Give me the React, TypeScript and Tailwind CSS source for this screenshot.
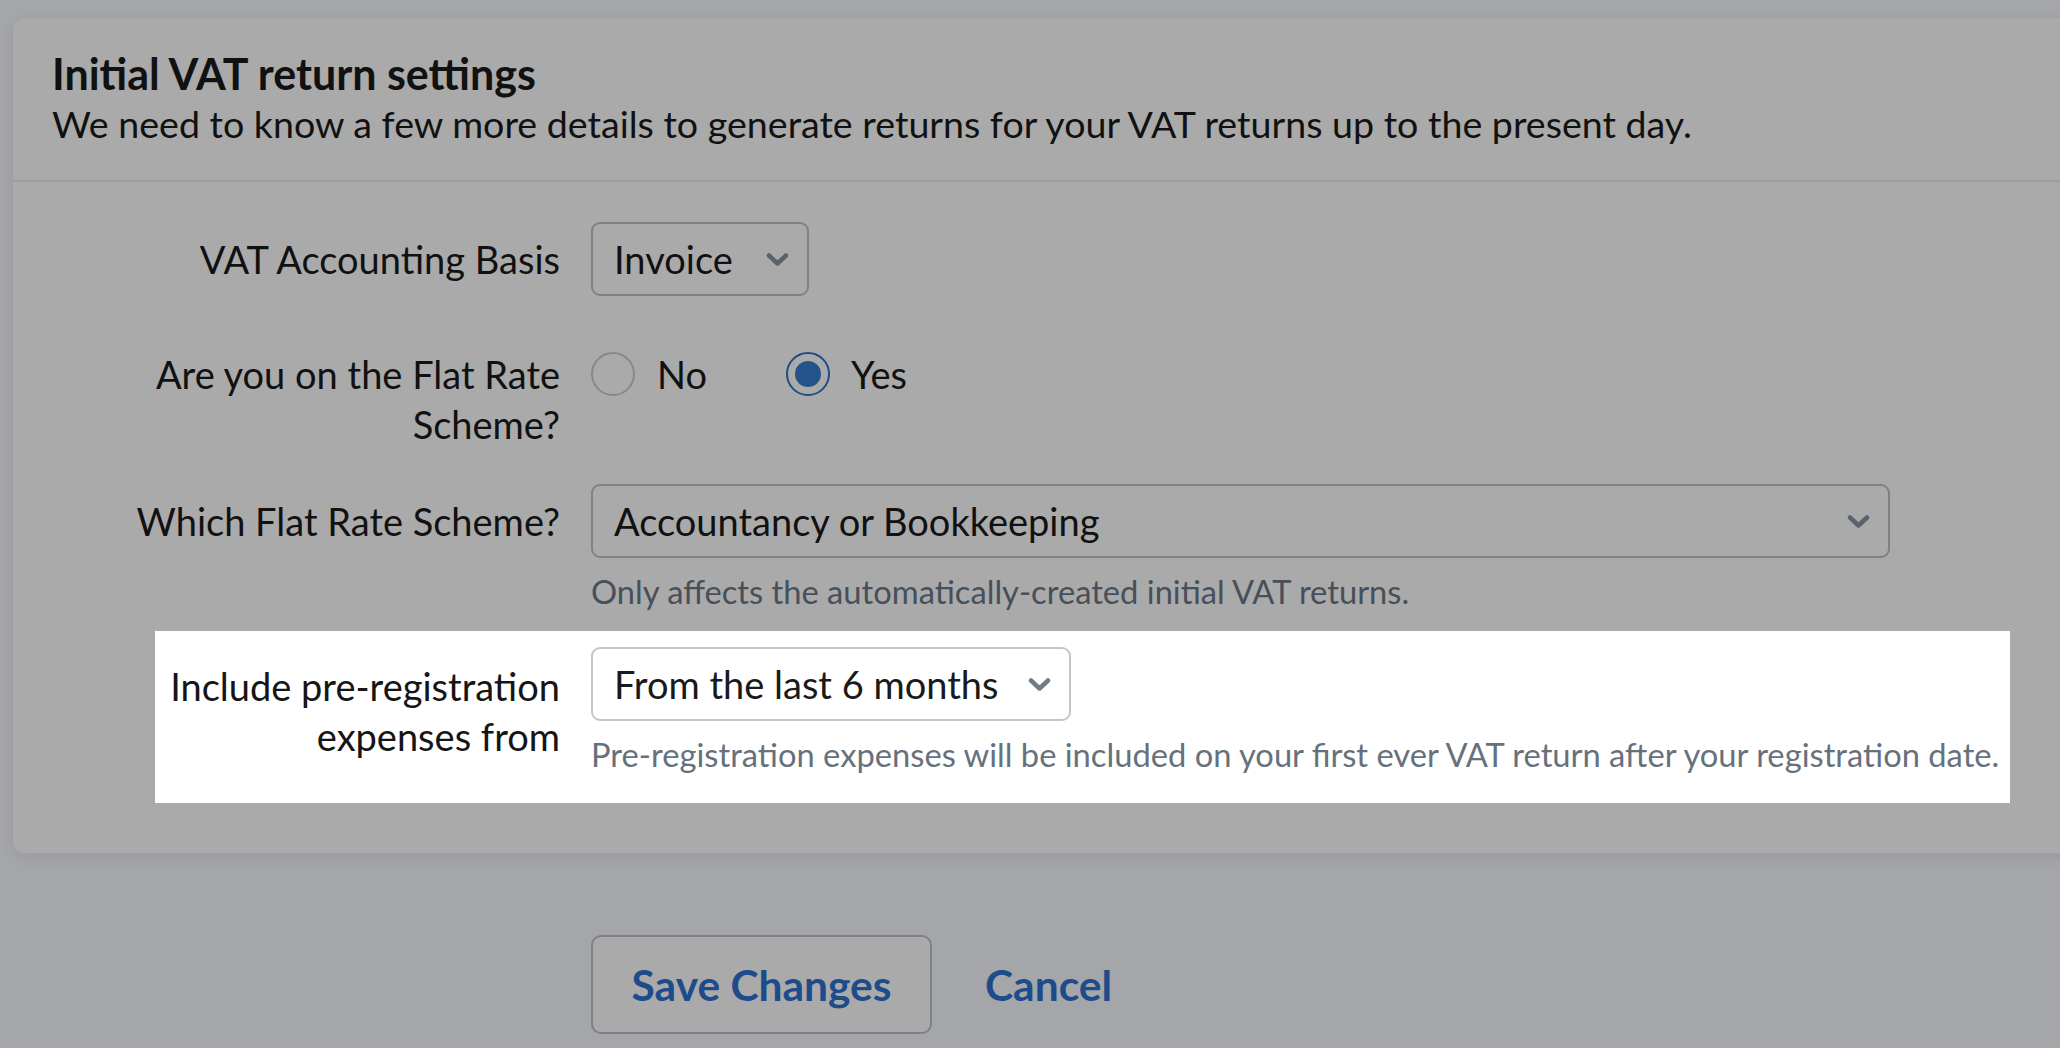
import React from "react";

const font = { fontFamily: "Lato, 'Open Sans', sans-serif" };

function Chevron({ color }: { color: string }) {
  return (
    <svg width="23" height="15" viewBox="0 0 23 15" className="shrink-0">
      <path d="M3 3.5 L11.5 11.5 L20 3.5" fill="none" stroke={color} strokeWidth="4.5" strokeLinecap="round" strokeLinejoin="round" />
    </svg>
  );
}

function Select({ value, width, light }: { value: string; width: string; light?: boolean }) {
  return (
    <div
      className={`${width} h-[74px] flex items-center justify-between pl-[21px] pr-[18px] rounded-[9px] border-2 ${
        light ? "border-[#c2c6cb] bg-white text-[#1a1a1a]" : "border-[#7e8186] text-[#111111]"
      } text-[38px]`}
    >
      <span className="whitespace-nowrap">{value}</span>
      <Chevron color={light ? "#707b86" : "#5a636c"} />
    </div>
  );
}

function Label({ lines, pt }: { lines: string[]; pt: string }) {
  return (
    <div className={`w-full flex flex-col items-end ${pt}`}>
      {lines.map((l) => (
        <span key={l} className="whitespace-nowrap text-[38px] leading-[50px] text-[#111111]">
          {l}
        </span>
      ))}
    </div>
  );
}

export default function App() {
  return (
    <div className="w-[2060px] h-[1048px] bg-[#a4a6aa] overflow-hidden pt-[17px] pl-[12px]" style={font}>
      <div className="w-[2100px] rounded-[12px] border border-[#9ea0a4] bg-[#aaaaaa] shadow-[0_4px_14px_rgba(0,0,0,0.07)]">
        {/* header */}
        <div className="pl-[39px] pt-[32px] pb-[32px] border-b-2 border-[#9c9ea2]">
          <div className="text-[43px] leading-[48px] font-bold text-[#111111]">Initial VAT return settings</div>
          <div className="mt-[2px] text-[37.6px] leading-[48px] text-[#111111] whitespace-nowrap">
            We need to know a few more details to generate returns for your VAT returns up to the present day.
          </div>
        </div>

        {/* form */}
        <div className="pt-[40px] pb-[50px]">
          {/* row 1 */}
          <div className="flex items-start">
            <div className="w-[547px] shrink-0">
              <Label lines={["VAT Accounting Basis"]} pt="pt-[12px]" />
            </div>
            <div className="ml-[31px]">
              <Select value="Invoice" width="w-[218px]" />
            </div>
          </div>

          {/* row 2 */}
          <div className="flex items-start mt-[53px]">
            <div className="w-[547px] shrink-0">
              <Label lines={["Are you on the Flat Rate", "Scheme?"]} pt="pt-0" />
            </div>
            <div className="ml-[31px] flex items-center h-[50px]">
              <div className="w-[195px] flex items-center">
                <div className="w-[44px] h-[44px] rounded-full border-2 border-[#85888d]" />
                <span className="ml-[22px] text-[38px] text-[#111111]">No</span>
              </div>
              <div className="flex items-center">
                <div className="w-[44px] h-[44px] rounded-full border-2 border-[#1f4d86] flex items-center justify-center">
                  <div className="w-[26px] h-[26px] rounded-full bg-[#22548a]" />
                </div>
                <span className="ml-[21px] text-[38px] text-[#111111]">Yes</span>
              </div>
            </div>
          </div>

          {/* row 3 */}
          <div className="flex items-start mt-[35px]">
            <div className="w-[547px] shrink-0">
              <Label lines={["Which Flat Rate Scheme?"]} pt="pt-[12px]" />
            </div>
            <div className="ml-[31px]">
              <Select value="Accountancy or Bookkeeping" width="w-[1299px]" />
              <div className="mt-[14px] text-[32.7px] leading-[40px] text-[#47505a] whitespace-nowrap">
                Only affects the automatically-created initial VAT returns.
              </div>
            </div>
          </div>

          {/* highlighted row 4 */}
          <div className="ml-[142px] w-[1855px] bg-white mt-[19px] pt-[16px] pb-[28px] flex items-start">
            <div className="w-[405px] shrink-0">
              <div className="w-full flex flex-col items-end pt-[14px]">
                <span className="whitespace-nowrap text-[38px] leading-[50px] text-[#151515]">Include pre-registration</span>
                <span className="whitespace-nowrap text-[38px] leading-[50px] text-[#151515]">expenses from</span>
              </div>
            </div>
            <div className="ml-[31px]">
              <Select value="From the last 6 months" width="w-[480px]" light />
              <div className="mt-[14px] text-[32.7px] leading-[40px] text-[#66717c] whitespace-nowrap">
                Pre-registration expenses will be included on your first ever VAT return after your registration date.
              </div>
            </div>
          </div>
        </div>
      </div>

      {/* buttons */}
      <div className="mt-[81px] ml-[579px] flex items-center">
        <button className="w-[341px] h-[99px] rounded-[10px] border-2 border-[#7e8186] bg-[#aaaaaa] text-[42.5px] font-bold text-[#1e4c8a]">
          Save Changes
        </button>
        <span className="ml-[53px] text-[42.5px] font-bold text-[#1e4c8a]">Cancel</span>
      </div>
    </div>
  );
}
